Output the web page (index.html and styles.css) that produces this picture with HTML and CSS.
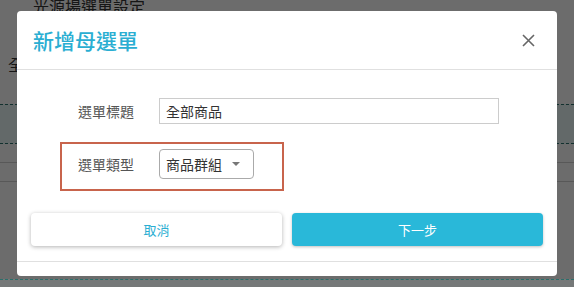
FILE: index.html
```html
<!DOCTYPE html>
<html lang="zh-Hant">
<head>
  <meta charset="UTF-8" />
  <meta name="viewport" content="width=device-width, initial-scale=1.0" />
  <title>新增母選單</title>
  <link rel="stylesheet" href="styles.css">
</head>
<body>
  <div class="page">
    <div class="page-title">光源場選單設定</div>
    <div class="page-row">全部商品</div>
    <div class="page-band"></div>
    <div class="page-line"></div>
    <div class="page-line"></div>
  </div>

  <div class="overlay"></div>

  <section class="modal" role="dialog" aria-labelledby="modal-title">
    <header class="modal-header">
      <h2 id="modal-title">新增母選單</h2>
      <button class="close-btn" aria-label="關閉">
        <svg width="13" height="13" viewBox="0 0 13 13">
          <path d="M1 1 L12 12 M12 1 L1 12" stroke="#666" stroke-width="1.6" fill="none" />
        </svg>
      </button>
    </header>

    <div class="modal-body">
      <div class="field">
        <label for="menu-title">選單標題</label>
        <input type="text" id="menu-title" value="全部商品" />
      </div>
      <div class="field field-marked">
        <label for="menu-type">選單類型</label>
        <div class="select" id="menu-type">
          <span>商品群組</span>
          <span class="caret"></span>
        </div>
      </div>
    </div>

    <div class="modal-actions">
      <button class="btn btn-cancel">取消</button>
      <button class="btn btn-next">下一步</button>
    </div>
    <div class="modal-footer"></div>
  </section>
</body>
</html>
```

FILE: styles.css
```css
* {
  box-sizing: border-box;
}
body {
  margin: 0;
  background-color: #fafafa;
  font-family: "Noto Sans CJK TC", "Noto Sans", sans-serif;
  overflow: hidden;
  height: 287px;
}
.page {
  padding-left: 33px;
}
.page-title {
  font-size: 16px;
  color: #333;
  margin-top: -6px;
  height: 58px;
}
.page-row {
  font-size: 16px;
  color: #333;
  height: 52px;
  margin-left: -25px;
}
.page-band {
  margin-left: -33px;
  height: 40px;
  background-color: #e6f4f3;
  border-top: 1px dashed #2b6f6b;
  border-bottom: 1px dashed #2b6f6b;
}
.page-line {
  margin-left: -33px;
  height: 19px;
  border-bottom: 1px solid #ccc;
}
.overlay {
  position: fixed;
  inset: 0;
  background-color: rgba(0, 0, 0, 0.57);
}
.overlay::after {
  content: "";
  position: absolute;
  left: 0;
  right: 0;
  top: 279px;
  height: 8px;
  border-top: 1px dashed #2b6f6b;
  background-color: rgba(200, 230, 228, 0.1);
}

.modal {
  position: fixed;
  top: 11px;
  left: 17px;
  width: 540px;
  background-color: #fff;
  border-radius: 4px;
}
.modal-header {
  display: flex;
  align-items: center;
  justify-content: space-between;
  height: 59px;
  padding: 0 22px 0 16px;
  border-bottom: 1px solid #e0e0e0;
}
.modal-header h2 {
  margin: 0;
  font-size: 21px;
  font-weight: 500;
  color: #2aaed2;
}
.close-btn {
  background: none;
  border: none;
  padding: 0;
  cursor: pointer;
  display: flex;
  margin-top: 1px;
}

.modal-body {
  padding: 21px 0 0 43px;
}
.field {
  display: flex;
  align-items: center;
  padding: 5px 16px;
  border: 2px solid transparent;
  font-size: 14px;
}
.field label {
  width: 81px;
  color: #555;
}
.field input {
  width: 340px;
  height: 26px;
  border: 1px solid #ccc;
  padding: 0 6px;
  font-family: inherit;
  font-size: 14px;
  color: #333;
}
.field-marked {
  width: 224px;
  margin-top: 11px;
  padding-bottom: 10px;
  border-color: #c8644c;
}
.select {
  display: flex;
  align-items: center;
  gap: 10px;
  width: 95px;
  height: 30px;
  padding: 0 6px;
  border: 1px solid #aaa;
  border-radius: 4px;
  color: #333;
}
.caret {
  width: 0;
  height: 0;
  border-left: 4px solid transparent;
  border-right: 4px solid transparent;
  border-top: 4px solid #777;
}

.modal-actions {
  display: flex;
  gap: 10px;
  padding: 22px 14px 15px;
}
.btn {
  flex: 1;
  height: 33px;
  border: none;
  border-radius: 4px;
  font-family: inherit;
  font-size: 13px;
  cursor: pointer;
}
.btn-cancel {
  background-color: #fff;
  color: #2aaed2;
  box-shadow: 0 1px 4px rgba(0, 0, 0, 0.3);
}
.btn-next {
  background-color: #29b8d9;
  color: #fff;
  box-shadow: 0 1px 3px rgba(0, 0, 0, 0.25);
}
.modal-footer {
  height: 15px;
  border-top: 1px solid #e0e0e0;
}
```
